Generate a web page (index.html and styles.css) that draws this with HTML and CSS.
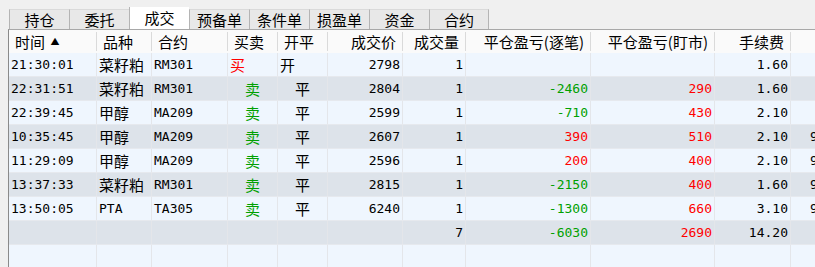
FILE: index.html
```html
<!DOCTYPE html>
<html lang="zh-CN">
<head>
  <meta charset="UTF-8">
  <title>成交</title>
  <link rel="stylesheet" href="styles.css">
</head>
<body>
  <div class="tabs">
    <div class="tab">持仓</div>
    <div class="tab">委托</div>
    <div class="tab active">成交</div>
    <div class="tab">预备单</div>
    <div class="tab">条件单</div>
    <div class="tab">损盈单</div>
    <div class="tab">资金</div>
    <div class="tab last">合约</div>
  </div>

  <div class="panel">
    <div class="row head">
      <div class="c">时间 <span class="sort">&#9650;</span></div>
      <div class="c">品种</div>
      <div class="c">合约</div>
      <div class="c">买卖</div>
      <div class="c">开平</div>
      <div class="c r">成交价</div>
      <div class="c r">成交量</div>
      <div class="c r">平仓盈亏(逐笔)</div>
      <div class="c r">平仓盈亏(盯市)</div>
      <div class="c r">手续费</div>
      <div class="c"></div>
    </div>

    <div class="row">
      <div class="c">21:30:01</div><div class="c cn">菜籽粕</div><div class="c">RM301</div>
      <div class="c cn up">买</div><div class="c cn">开</div>
      <div class="c r">2798</div><div class="c r">1</div><div class="c r"></div><div class="c r"></div>
      <div class="c r">1.60</div><div class="c"></div>
    </div>
    <div class="row alt">
      <div class="c">22:31:51</div><div class="c cn">菜籽粕</div><div class="c">RM301</div>
      <div class="c cn mid dn">卖</div><div class="c cn mid">平</div>
      <div class="c r">2804</div><div class="c r">1</div><div class="c r dn">-2460</div><div class="c r up">290</div>
      <div class="c r">1.60</div><div class="c"></div>
    </div>
    <div class="row">
      <div class="c">22:39:45</div><div class="c cn">甲醇</div><div class="c">MA209</div>
      <div class="c cn mid dn">卖</div><div class="c cn mid">平</div>
      <div class="c r">2599</div><div class="c r">1</div><div class="c r dn">-710</div><div class="c r up">430</div>
      <div class="c r">2.10</div><div class="c"></div>
    </div>
    <div class="row alt">
      <div class="c">10:35:45</div><div class="c cn">甲醇</div><div class="c">MA209</div>
      <div class="c cn mid dn">卖</div><div class="c cn mid">平</div>
      <div class="c r">2607</div><div class="c r">1</div><div class="c r up">390</div><div class="c r up">510</div>
      <div class="c r">2.10</div><div class="c x">9</div>
    </div>
    <div class="row">
      <div class="c">11:29:09</div><div class="c cn">甲醇</div><div class="c">MA209</div>
      <div class="c cn mid dn">卖</div><div class="c cn mid">平</div>
      <div class="c r">2596</div><div class="c r">1</div><div class="c r up">200</div><div class="c r up">400</div>
      <div class="c r">2.10</div><div class="c x">9</div>
    </div>
    <div class="row alt">
      <div class="c">13:37:33</div><div class="c cn">菜籽粕</div><div class="c">RM301</div>
      <div class="c cn mid dn">卖</div><div class="c cn mid">平</div>
      <div class="c r">2815</div><div class="c r">1</div><div class="c r dn">-2150</div><div class="c r up">400</div>
      <div class="c r">1.60</div><div class="c x">9</div>
    </div>
    <div class="row">
      <div class="c">13:50:05</div><div class="c">PTA</div><div class="c">TA305</div>
      <div class="c cn mid dn">卖</div><div class="c cn mid">平</div>
      <div class="c r">6240</div><div class="c r">1</div><div class="c r dn">-1300</div><div class="c r up">660</div>
      <div class="c r">3.10</div><div class="c x">9</div>
    </div>
    <div class="row alt">
      <div class="c"></div><div class="c"></div><div class="c"></div>
      <div class="c"></div><div class="c"></div>
      <div class="c r"></div><div class="c r">7</div><div class="c r dn">-6030</div><div class="c r up">2690</div>
      <div class="c r">14.20</div><div class="c"></div>
    </div>
    <div class="row">
      <div class="c"></div><div class="c"></div><div class="c"></div>
      <div class="c"></div><div class="c"></div>
      <div class="c"></div><div class="c"></div><div class="c"></div><div class="c"></div>
      <div class="c"></div><div class="c"></div>
    </div>
  </div>
</body>
</html>
```

FILE: styles.css
```css
body {
  margin: 0;
  background: #f0f0f0;
  font-family: "Noto Sans CJK SC", sans-serif;
  color: #000;
  overflow: hidden;
}

/* tab strip */
.tabs {
  display: flex;
  align-items: flex-end;
  height: 22px;
  padding: 7px 0 0 9px;
}
.tab {
  width: 60px;
  height: 20px;
  box-sizing: border-box;
  border-left: 1px solid #b4b4b4;
  border-top: 1px solid #dadada;
  background: #e8e8e8;
  font-size: 15px;
  line-height: 19px;
  text-align: center;
}
.tab.last {
  border-right: 1px solid #b4b4b4;
}
.tab.active {
  height: 22px;
  background: #fff;
  border-top: none;
  line-height: 22px;
}

/* grid */
.panel {
  margin-left: 8px;
  height: 240px;
  border-left: 1px solid #8a8a8a;
  border-top: 1px solid #a8a8a8;
  background: #eff6fe;
  overflow: hidden;
}
.row {
  display: grid;
  grid-template-columns: 88px 55px 76px 50px 50px 75px 63px 125px 124px 76px 90px;
  height: 24px;
  box-sizing: border-box;
  border-bottom: 1px solid #e6e9ee;
  background: #eff6fe;
  font-family: "DejaVu Sans Mono", monospace;
  font-size: 13px;
}
.row.alt {
  background: #dde3ea;
}
.c {
  box-sizing: border-box;
  border-right: 1px solid #e4e6ea;
  padding: 0 2px;
  line-height: 23px;
  white-space: nowrap;
}
.c.r {
  text-align: right;
}
.c.cn {
  font-family: "Noto Sans CJK SC", sans-serif;
  font-size: 15px;
}
.c.mid {
  text-align: center;
}
.c.x {
  padding-left: 19px;
}
.up {
  color: #f00;
}
.dn {
  color: #00a000;
}

.row.head {
  height: 23px;
  align-items: center;
  background: #fafafa;
  border-bottom: none;
  font-family: "Noto Sans CJK SC", sans-serif;
  font-size: 15px;
}
.head .c {
  height: 19px;
  line-height: 19px;
  padding: 0 6px;
  border-right-color: #dadada;
}
.sort {
  font-size: 9px;
  vertical-align: 3px;
  margin-left: 2px;
}
```
